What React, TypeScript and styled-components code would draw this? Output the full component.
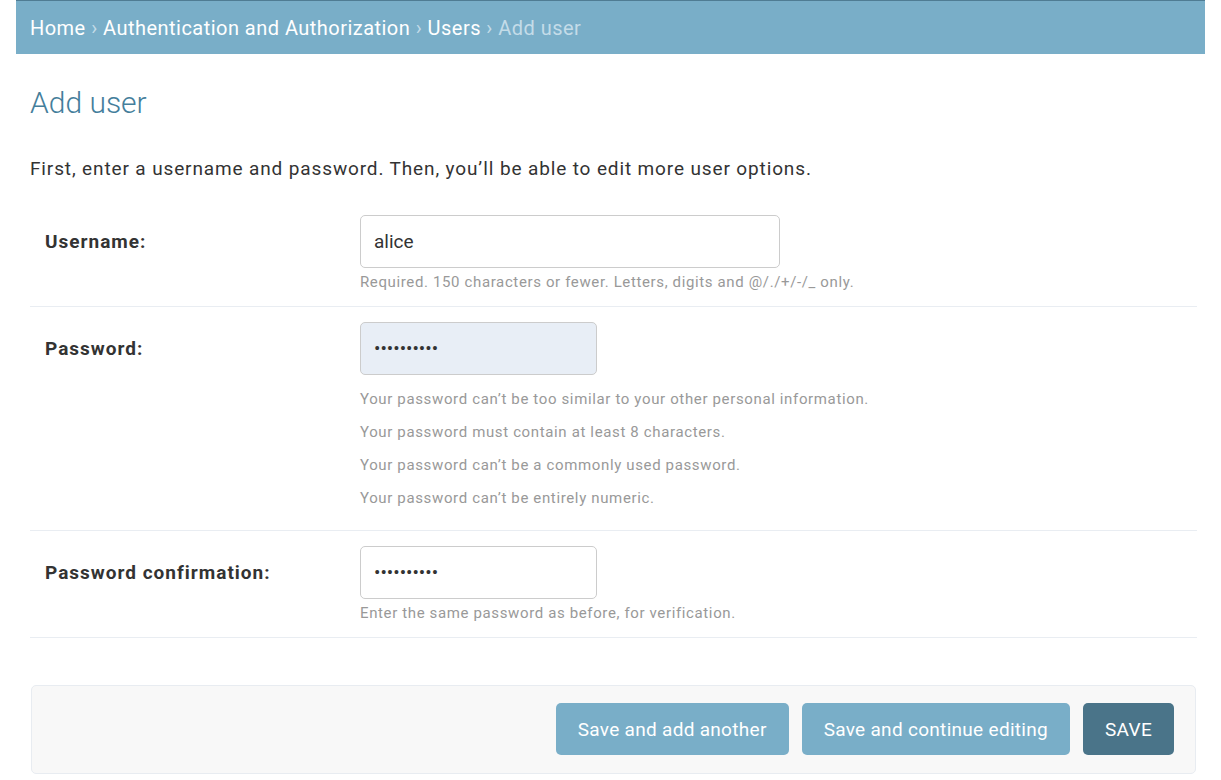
import styled, { createGlobalStyle } from "styled-components";

const GlobalStyle = createGlobalStyle`
  html, body {
    margin: 0;
    padding: 0;
    background: #fff;
  }
  body {
    font-family: Roboto, "Liberation Sans", sans-serif;
    color: #333;
  }
`;

const Page = styled.div`
  padding: 0 16px;
`;

const Breadcrumbs = styled.nav`
  background: #79aec8;
  border-top: 1px solid #4f7c93;
  height: 53px;
  display: flex;
  align-items: center;
  padding: 0 14px;
  font-size: 20px;
  letter-spacing: 0.47px;
  color: #c4dce8;
  white-space: pre;
`;

const Crumb = styled.a`
  color: #fff;
  text-decoration: none;
`;

const Content = styled.main`
  padding: 0 8px 0 14px;
`;

const Title = styled.h1`
  margin: 31px 0 0;
  font-size: 30px;
  line-height: 36px;
  font-weight: 300;
  color: #447e9b;
`;

const Intro = styled.p`
  margin: 35px 0 18px;
  font-size: 19px;
  line-height: 26px;
  letter-spacing: 0.87px;
  color: #333;
`;

const Row = styled.div`
  display: flex;
  align-items: flex-start;
  padding: 15px 15px 13px;
  border-bottom: 1px solid #e9edf2;
`;

const Label = styled.label`
  flex: 0 0 315px;
  font-size: 19px;
  font-weight: 700;
  line-height: 54px;
  letter-spacing: 1px;
  color: #333;
`;

const Field = styled.div`
  display: flex;
  flex-direction: column;
`;

const Input = styled.input<{ $w: number; $filled?: boolean }>`
  box-sizing: border-box;
  width: ${(p) => p.$w}px;
  height: 53px;
  padding: 0 13px;
  border: 1px solid #ccc;
  border-radius: 5px;
  background: ${(p) => (p.$filled ? "#e8eef6" : "#fff")};
  font-family: Roboto, "Liberation Sans", sans-serif;
  font-size: 19px;
  color: #333;
  outline: none;
`;

const Help = styled.div`
  margin-top: 4px;
  font-size: 15px;
  line-height: 21px;
  letter-spacing: 0.63px;
  color: #999;
`;

const HelpList = styled.ul`
  list-style: none;
  margin: 8px 0 0;
  padding: 0 0 2px;
  font-size: 15px;
  line-height: 21px;
  letter-spacing: 0.64px;
  color: #999;
  li {
    padding: 6px 0;
  }
`;

const SubmitRow = styled.div`
  margin: 47px 1px 0 1px;
  padding: 17px 21px 18px;
  display: flex;
  justify-content: flex-end;
  gap: 13px;
  background: #f8f8f8;
  border: 1px solid #e8ecf1;
  border-radius: 5px;
`;

const Button = styled.button<{ $primary?: boolean }>`
  height: 52px;
  padding: 0 22px;
  border: none;
  border-radius: 5px;
  background: ${(p) => (p.$primary ? "#4a7489" : "#79aec8")};
  color: #fff;
  font-family: Roboto, "Liberation Sans", sans-serif;
  font-size: 19px;
  letter-spacing: 0.3px;
  cursor: pointer;
`;

export default function App() {
  return (
    <Page>
      <GlobalStyle />
      <Breadcrumbs>
        <Crumb href="#">Home</Crumb>{" › "}
        <Crumb href="#">Authentication and Authorization</Crumb>{" › "}
        <Crumb href="#">Users</Crumb>{" › Add user"}
      </Breadcrumbs>
      <Content>
        <Title>Add user</Title>
        <Intro>First, enter a username and password. Then, you’ll be able to edit more user options.</Intro>
        <form onSubmit={(e) => e.preventDefault()}>
          <Row>
            <Label htmlFor="id_username">Username:</Label>
            <Field>
              <Input id="id_username" $w={420} defaultValue="alice" readOnly />
              <Help>Required. 150 characters or fewer. Letters, digits and @/./+/-/_ only.</Help>
            </Field>
          </Row>
          <Row>
            <Label htmlFor="id_password1">Password:</Label>
            <Field>
              <Input id="id_password1" type="password" $w={237} $filled defaultValue="secretpass" readOnly />
              <HelpList>
                <li>Your password can’t be too similar to your other personal information.</li>
                <li>Your password must contain at least 8 characters.</li>
                <li>Your password can’t be a commonly used password.</li>
                <li>Your password can’t be entirely numeric.</li>
              </HelpList>
            </Field>
          </Row>
          <Row>
            <Label htmlFor="id_password2">Password confirmation:</Label>
            <Field>
              <Input id="id_password2" type="password" $w={237} defaultValue="secretpass" readOnly />
              <Help>Enter the same password as before, for verification.</Help>
            </Field>
          </Row>
          <SubmitRow>
            <Button type="button">Save and add another</Button>
            <Button type="button">Save and continue editing</Button>
            <Button type="submit" $primary>SAVE</Button>
          </SubmitRow>
        </form>
      </Content>
    </Page>
  );
}
